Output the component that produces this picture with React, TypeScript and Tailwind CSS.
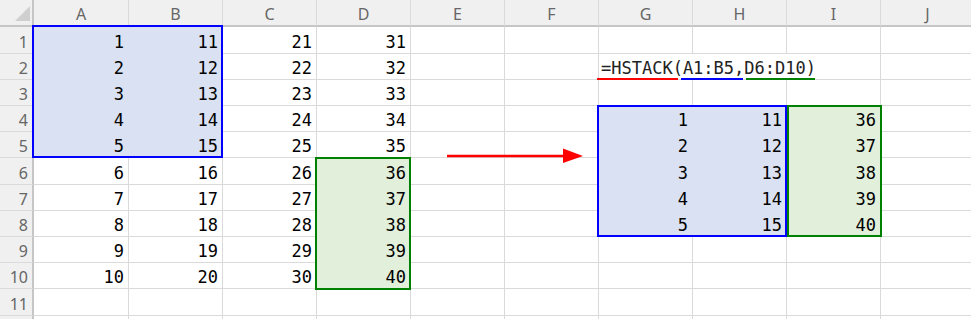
const COLS = ['A', 'B', 'C', 'D', 'E', 'F', 'G', 'H', 'I', 'J'];
const ROWS = [1, 2, 3, 4, 5, 6, 7, 8, 9, 10, 11, 12];
// rows 1, 6 and 11 are a pixel taller, like the sheet's zoom rounding
const TALL_ROWS = [1, 6, 11];

type Fill = 'blue' | 'green' | null;

function valueAt(r: number, c: number): number | null {
  if (r <= 10 && c <= 3) return r + c * 10;
  if (r >= 4 && r <= 8) {
    if (c === 6) return r - 3;
    if (c === 7) return r + 7;
    if (c === 8) return r + 32;
  }
  return null;
}

function fillAt(r: number, c: number): Fill {
  if (r <= 5 && c <= 1) return 'blue';
  if (r >= 6 && r <= 10 && c === 3) return 'green';
  if (r >= 4 && r <= 8 && (c === 6 || c === 7)) return 'blue';
  if (r >= 4 && r <= 8 && c === 8) return 'green';
  return null;
}

const mono = "font-['DejaVu_Sans_Mono','Liberation_Mono',monospace]";
const ui = "font-['Noto_Sans','Open_Sans',sans-serif]";

function Cell({ r, c }: { r: number; c: number }) {
  const fill = fillAt(r, c);
  const v = valueAt(r, c);
  const colors =
    fill === 'blue'
      ? 'bg-[#d9e1f2] border-[#d9e1f2]'
      : fill === 'green'
        ? 'bg-[#e2efda] border-[#e2efda]'
        : 'bg-white border-[#dadada]';

  return (
    <div
      className={`relative shrink-0 border-r border-b ${colors} ${c === 0 ? 'w-[95px]' : 'w-[94px]'} flex items-center justify-end pr-[4px] pt-[4px] text-[17px] leading-none text-black ${mono}`}
    >
      {v !== null && <span>{v}</span>}
      {r === 2 && c === 6 && (
        <div className="absolute left-0 top-0 bottom-0 z-10 w-[222px] bg-white flex items-center pt-[4px] pl-[2px] whitespace-nowrap text-[#222]">
          =HSTACK(A1:B5,D6:D10)
          <div className="absolute left-[-2px] top-[24px] h-[2px] w-[81px] bg-[#ff0000]" />
          <div className="absolute left-[82px] top-[24px] h-[2px] w-[62px] bg-[#0000ff]" />
          <div className="absolute left-[147px] top-[24px] h-[2px] w-[69px] bg-[#008000]" />
        </div>
      )}
    </div>
  );
}

export default function App() {
  return (
    <div className="relative w-[971px] h-[319px] overflow-hidden bg-white">
      {/* column headings */}
      <div className="flex w-max h-[27px]">
        <div className="shrink-0 w-[34px] border-r-2 border-b-2 border-[#c6c6c6] bg-[#f0f0f0] relative">
          <svg className="absolute left-0 top-0" width="32" height="25" viewBox="0 0 32 25">
            <polygon points="30,6 30,21 15,21" fill="#cfcfcf" />
          </svg>
        </div>
        {COLS.map((col, i) => (
          <div
            key={col}
            className={`shrink-0 ${i === 0 ? 'w-[95px]' : 'w-[94px]'} border-r border-r-[#dadada] border-b-2 border-b-[#c6c6c6] bg-[#f0f0f0] flex items-center justify-center pt-[3px] text-[16px] leading-none text-[#666] ${ui}`}
          >
            {col}
          </div>
        ))}
      </div>

      {/* body rows; row 12 only peeks in at the bottom edge */}
      {ROWS.map((r) => (
        <div key={r} className={`flex w-max ${TALL_ROWS.includes(r) ? 'h-[27px]' : 'h-[26px]'}`}>
          <div
            className={`shrink-0 w-[34px] border-r-2 border-b border-r-[#c6c6c6] border-b-[#dadada] bg-[#f0f0f0] flex items-center justify-end pr-[4px] pt-[3px] text-[16px] leading-none text-[#666] ${ui}`}
          >
            {r <= 11 ? r : null}
          </div>
          {COLS.map((col, c) => (
            <Cell key={col} r={r} c={c} />
          ))}
        </div>
      ))}

      {/* range outlines */}
      <div className="absolute left-[32px] top-[25px] w-[191px] h-[133px] border-2 border-[#0000ff] pointer-events-none" />
      <div className="absolute left-[315px] top-[157px] w-[96px] h-[133px] border-2 border-[#008000] pointer-events-none" />
      <div className="absolute left-[597px] top-[105px] w-[190px] h-[132px] border-2 border-[#0000ff] pointer-events-none" />
      <div className="absolute left-[787px] top-[105px] w-[95px] h-[132px] border-2 border-[#008000] pointer-events-none" />

      {/* arrow from source ranges to result */}
      <svg className="absolute left-[446px] top-[146px]" width="140" height="20" viewBox="0 0 140 20">
        <line x1="1" y1="10" x2="119" y2="10" stroke="#ff0000" strokeWidth="2.5" />
        <polygon points="117,2.5 137,10 117,17" fill="#ff0000" />
      </svg>
    </div>
  );
}
